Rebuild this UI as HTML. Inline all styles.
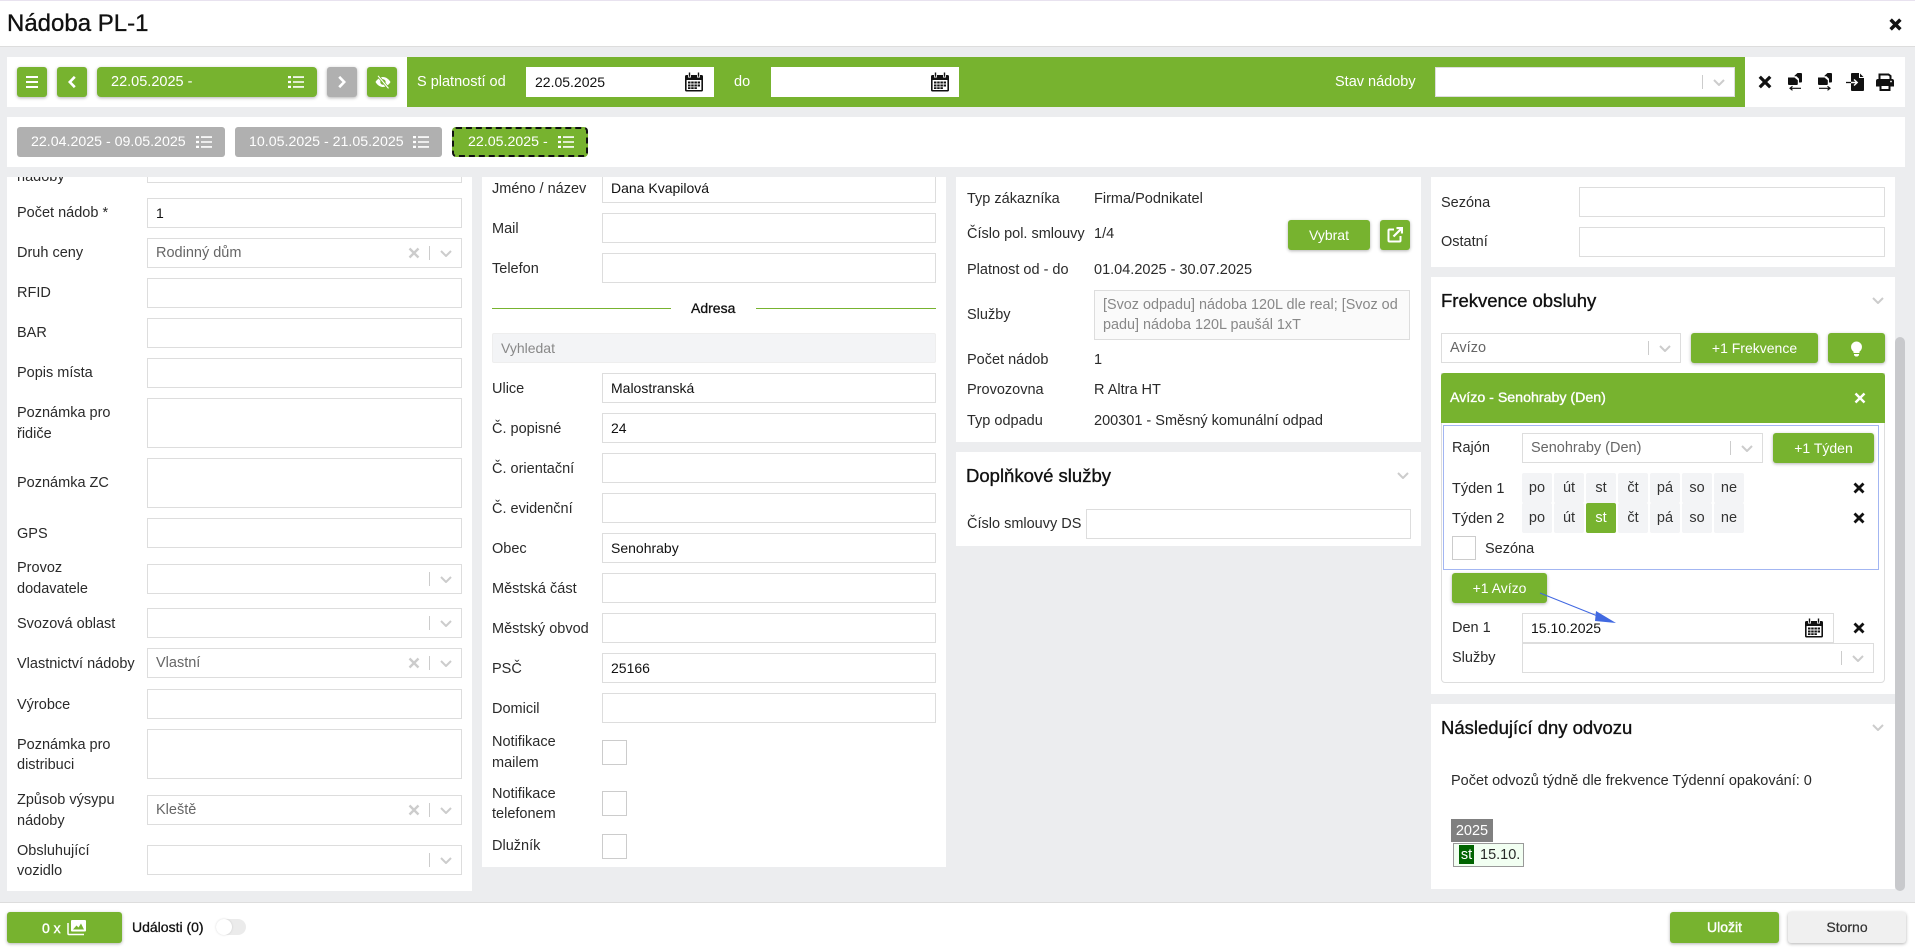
<!DOCTYPE html>
<html lang="cs"><head><meta charset="utf-8"><title>Nádoba PL-1</title>
<style>
html,body{margin:0;padding:0;width:1915px;height:952px;overflow:hidden;background:#ecedef;font-family:"Liberation Sans",sans-serif;color:#222}
*{box-sizing:border-box}
.b,.t,.in,.btn,svg.a{position:absolute}
.b{background:#fff}
.t{line-height:20px;white-space:nowrap;font-size:14.5px;color:#2a2a2a}
.n .t{margin-top:1px}
.h{font-size:18.5px;line-height:24px;color:#111;-webkit-text-stroke:.35px #111}
.in{height:30px;border:1px solid #ddd;background:#fff;line-height:28px;padding-left:8px;font-size:14px;color:#111;white-space:nowrap}
.in.s{font-size:14.5px;color:#666}
.in .sp{position:absolute;right:31px;top:7px;width:1px;height:14px;background:#ccc}
.in svg{position:absolute}
.in svg.c{right:9px;top:11px;width:12px;height:7px}
.in svg.x{right:41px;top:8px;width:12px;height:12px}
.btn{height:30px;background:#77b32f;border-radius:3px;color:#fff;text-align:center;line-height:30px;font-size:14px;box-shadow:0 1px 3px rgba(0,0,0,.3);white-space:nowrap}
.d{position:absolute;width:30px;height:30px;background:#f3f4f6;border-radius:2px;text-align:center;line-height:30px;font-size:14.5px;color:#333}
.cb{position:absolute;border:1px solid #ccc;background:#fff}
</style></head><body>
<svg width="0" height="0" style="position:absolute">
<symbol id="chev" viewBox="0 0 12 7"><polyline points="1,1 6,6 11,1" fill="none" stroke="#ccc" stroke-width="2"/></symbol>
<symbol id="xg" viewBox="0 0 12 12"><path d="M1.500 1.500L10.500 10.500M10.500 1.500L1.500 10.500" stroke="#ccc" stroke-width="2.400" fill="none"/></symbol>
<symbol id="xk" viewBox="0 0 12 12"><path d="M1.500 1.500L10.500 10.500M10.500 1.500L1.500 10.500" stroke="#111" stroke-width="2.800" fill="none"/></symbol>
<symbol id="xw" viewBox="0 0 12 12"><path d="M1.500 1.500L10.500 10.500M10.500 1.500L1.500 10.500" stroke="#fff" stroke-width="2.400" fill="none"/></symbol>
<symbol id="list" viewBox="0 0 16 14"><path d="M0 1h3v2.200H0zM0 5.900h3v2.200H0zM0 10.800h3v2.200H0zM5 1.300h11v1.600H5zM5 6.200h11v1.600H5zM5 11.100h11v1.600H5z" fill="#fff"/></symbol>
<symbol id="cal" viewBox="0 0 20 20"><path d="M1 4.500A1.500 1.500 0 0 1 2.500 3H4v2.500h3V3h6v2.500h3V3h1.500A1.500 1.500 0 0 1 19 4.500V18a1.500 1.500 0 0 1-1.500 1.500h-15A1.500 1.500 0 0 1 1 18z" fill="#111"/><path d="M4.800 .5h1.400v4.200H4.800zM13.800 .5h1.400v4.200h-1.400z" fill="#111"/><path d="M2.600 8h14.800v10H2.600z" fill="#fff"/><path d="M4 9.500h2.500v2H4zM7.200 9.500h2.500v2H7.200zM10.400 9.500h2.500v2h-2.500zM13.600 9.500H16v2h-2.400zM4 12.500h2.500v2H4zM7.200 12.500h2.500v2H7.200zM10.400 12.500h2.500v2h-2.500zM13.600 12.500H16v2h-2.400zM4 15.300h2.500v1.700H4zM7.200 15.300h2.500v1.700H7.200zM10.400 15.300h2.500v1.700h-2.500z" fill="#111"/></symbol>
<symbol id="copy" viewBox="0 0 14 18"><path d="M6.500 2.800L9.500 0H13a1 1 0 0 1 1 1v7.500a1 1 0 0 1-1 1h-2V5.800L8.500 3.300H6.500z" fill="#111"/><path d="M0 4.500h6.500L9.800 7.200V11a1 1 0 0 1-1 1H1a1 1 0 0 1-1-1z" fill="#111"/></symbol>
</svg>

<!-- Header -->
<div class="b" style="left:0;top:0;width:1915px;height:47px;border-top:1px solid #e8e2ef;border-bottom:1px solid #ddd"></div>
<div class="t" style="left:7px;top:9px;font-size:24px;line-height:30px;color:#111;-webkit-text-stroke:.35px #111">Nádoba PL-1</div>
<svg class="a" style="left:1889px;top:18px" width="13" height="13" viewBox="0 0 12 12"><path d="M1.500 1.500L10.500 10.500M10.500 1.500L1.500 10.500" stroke="#111" stroke-width="3.200" fill="none"/></svg>

<!-- Panels -->
<div class="b" style="left:7px;top:177px;width:465px;height:714px"></div>
<div class="b" style="left:482px;top:177px;width:464px;height:690px"></div>
<div class="b" style="left:956px;top:177px;width:465px;height:265px"></div>
<div class="b" style="left:956px;top:452px;width:465px;height:94px"></div>
<div class="b" style="left:1431px;top:177px;width:464px;height:90px"></div>
<div class="b" style="left:1431px;top:277px;width:464px;height:417px"></div>
<div class="b" style="left:1431px;top:704px;width:464px;height:185px"></div>
<div style="position:absolute;left:1895px;top:337px;width:10px;height:554px;background:#c8c9cc;border-radius:5px"></div>

<div class="n">
<!-- Panel 1 -->
<div class="t" style="left:17px;top:166px">nádoby</div>
<div class="in" style="left:147px;top:153px;width:315px"></div>
<div class="t" style="left:17px;top:202px">Počet nádob *</div>
<div class="in" style="left:147px;top:198px;width:315px">1</div>
<div class="t" style="left:17px;top:242px">Druh ceny</div>
<div class="in s" style="left:147px;top:238px;width:315px">Rodinný dům<svg class="x"><use href="#xg"/></svg><i class="sp"></i><svg class="c"><use href="#chev"/></svg></div>
<div class="t" style="left:17px;top:282px">RFID</div>
<div class="in" style="left:147px;top:278px;width:315px"></div>
<div class="t" style="left:17px;top:322px">BAR</div>
<div class="in" style="left:147px;top:318px;width:315px"></div>
<div class="t" style="left:17px;top:362px">Popis místa</div>
<div class="in" style="left:147px;top:358px;width:315px"></div>
<div class="t" style="left:17px;top:402px">Poznámka pro</div>
<div class="t" style="left:17px;top:423px">řidiče</div>
<div class="in" style="left:147px;top:398px;width:315px;height:50px"></div>
<div class="t" style="left:17px;top:472px">Poznámka ZC</div>
<div class="in" style="left:147px;top:458px;width:315px;height:50px"></div>
<div class="t" style="left:17px;top:523px">GPS</div>
<div class="in" style="left:147px;top:518px;width:315px"></div>
<div class="t" style="left:17px;top:557px">Provoz</div>
<div class="t" style="left:17px;top:578px">dodavatele</div>
<div class="in s" style="left:147px;top:564px;width:315px"><i class="sp"></i><svg class="c"><use href="#chev"/></svg></div>
<div class="t" style="left:17px;top:613px">Svozová oblast</div>
<div class="in s" style="left:147px;top:608px;width:315px"><i class="sp"></i><svg class="c"><use href="#chev"/></svg></div>
<div class="t" style="left:17px;top:653px">Vlastnictví nádoby</div>
<div class="in s" style="left:147px;top:648px;width:315px">Vlastní<svg class="x"><use href="#xg"/></svg><i class="sp"></i><svg class="c"><use href="#chev"/></svg></div>
<div class="t" style="left:17px;top:694px">Výrobce</div>
<div class="in" style="left:147px;top:689px;width:315px"></div>
<div class="t" style="left:17px;top:734px">Poznámka pro</div>
<div class="t" style="left:17px;top:754px">distribuci</div>
<div class="in" style="left:147px;top:729px;width:315px;height:50px"></div>
<div class="t" style="left:17px;top:789px">Způsob výsypu</div>
<div class="t" style="left:17px;top:810px">nádoby</div>
<div class="in s" style="left:147px;top:795px;width:315px">Kleště<svg class="x"><use href="#xg"/></svg><i class="sp"></i><svg class="c"><use href="#chev"/></svg></div>
<div class="t" style="left:17px;top:840px">Obsluhující</div>
<div class="t" style="left:17px;top:860px">vozidlo</div>
<div class="in s" style="left:147px;top:845px;width:315px"><i class="sp"></i><svg class="c"><use href="#chev"/></svg></div>

<!-- Panel 2 -->
<div class="t" style="left:492px;top:178px">Jméno / název</div>
<div class="in" style="left:602px;top:173px;width:334px">Dana Kvapilová</div>
<div class="t" style="left:492px;top:218px">Mail</div>
<div class="in" style="left:602px;top:213px;width:334px"></div>
<div class="t" style="left:492px;top:258px">Telefon</div>
<div class="in" style="left:602px;top:253px;width:334px"></div>
<div style="position:absolute;left:492px;top:308px;width:179px;height:1px;background:#77b32f"></div>
<div style="position:absolute;left:756px;top:308px;width:180px;height:1px;background:#77b32f"></div>
<div class="t" style="left:691px;top:297px;font-size:14px;color:#111;-webkit-text-stroke:.3px #111">Adresa</div>
<div class="in" style="left:492px;top:333px;width:444px;background:#f3f4f6;border:1px solid #eee;border-radius:2px;color:#888">Vyhledat</div>
<div class="t" style="left:492px;top:378px">Ulice</div>
<div class="in" style="left:602px;top:373px;width:334px">Malostranská</div>
<div class="t" style="left:492px;top:418px">Č. popisné</div>
<div class="in" style="left:602px;top:413px;width:334px">24</div>
<div class="t" style="left:492px;top:458px">Č. orientační</div>
<div class="in" style="left:602px;top:453px;width:334px"></div>
<div class="t" style="left:492px;top:498px">Č. evidenční</div>
<div class="in" style="left:602px;top:493px;width:334px"></div>
<div class="t" style="left:492px;top:538px">Obec</div>
<div class="in" style="left:602px;top:533px;width:334px">Senohraby</div>
<div class="t" style="left:492px;top:578px">Městská část</div>
<div class="in" style="left:602px;top:573px;width:334px"></div>
<div class="t" style="left:492px;top:618px">Městský obvod</div>
<div class="in" style="left:602px;top:613px;width:334px"></div>
<div class="t" style="left:492px;top:658px">PSČ</div>
<div class="in" style="left:602px;top:653px;width:334px">25166</div>
<div class="t" style="left:492px;top:698px">Domicil</div>
<div class="in" style="left:602px;top:693px;width:334px"></div>
<div class="t" style="left:492px;top:731px">Notifikace</div>
<div class="t" style="left:492px;top:752px">mailem</div>
<div class="cb" style="left:602px;top:740px;width:25px;height:25px"></div>
<div class="t" style="left:492px;top:783px">Notifikace</div>
<div class="t" style="left:492px;top:803px">telefonem</div>
<div class="cb" style="left:602px;top:791px;width:25px;height:25px"></div>
<div class="t" style="left:492px;top:835px">Dlužník</div>
<div class="cb" style="left:602px;top:834px;width:25px;height:25px"></div>
</div>

<!-- Panel 3 -->
<div class="t" style="left:967px;top:189px">Typ zákazníka</div>
<div class="t" style="left:1094px;top:189px">Firma/Podnikatel</div>
<div class="t" style="left:967px;top:224px">Číslo pol. smlouvy</div>
<div class="t" style="left:1094px;top:224px">1/4</div>
<div class="btn" style="left:1288px;top:220px;width:82px">Vybrat</div>
<div class="btn" style="left:1380px;top:220px;width:30px"></div>
<svg class="a" style="left:1387px;top:227px" width="16" height="16" viewBox="0 0 16 16"><path d="M7 2.500H2.500a1 1 0 0 0-1 1v10a1 1 0 0 0 1 1h10a1 1 0 0 0 1-1V9" fill="none" stroke="#fff" stroke-width="2"/><path d="M6.500 9.500L14 2M9.500 1h5.500v5.500" fill="none" stroke="#fff" stroke-width="2.200"/></svg>
<div class="t" style="left:967px;top:260px">Platnost od - do</div>
<div class="t" style="left:1094px;top:260px">01.04.2025 - 30.07.2025</div>
<div class="t" style="left:967px;top:305px">Služby</div>
<div style="position:absolute;left:1094px;top:290px;width:316px;height:50px;background:#fafafa;border:1px solid #ddd"></div>
<div class="t" style="left:1103px;top:295px;color:#888;font-size:14.4px">[Svoz odpadu] nádoba 120L dle real; [Svoz od</div>
<div class="t" style="left:1103px;top:315px;color:#888;font-size:14.4px">padu] nádoba 120L paušál 1xT</div>
<div class="t" style="left:967px;top:350px">Počet nádob</div>
<div class="t" style="left:1094px;top:350px">1</div>
<div class="t" style="left:967px;top:380px">Provozovna</div>
<div class="t" style="left:1094px;top:380px">R Altra HT</div>
<div class="t" style="left:967px;top:411px">Typ odpadu</div>
<div class="t" style="left:1094px;top:411px">200301 - Směsný komunální odpad</div>
<div class="t h" style="left:966px;top:464px">Doplňkové služby</div>
<svg class="a" style="left:1397px;top:472px" width="12" height="7"><use href="#chev"/></svg>
<div class="t" style="left:967px;top:514px">Číslo smlouvy DS</div>
<div class="in" style="left:1086px;top:509px;width:325px"></div>

<!-- Panel 4 -->
<div class="t" style="left:1441px;top:193px">Sezóna</div>
<div class="in" style="left:1579px;top:187px;width:306px"></div>
<div class="t" style="left:1441px;top:232px">Ostatní</div>
<div class="in" style="left:1579px;top:227px;width:306px"></div>

<div class="t h" style="left:1441px;top:289px">Frekvence obsluhy</div>
<svg class="a" style="left:1872px;top:297px" width="12" height="7"><use href="#chev"/></svg>
<div class="in s" style="left:1441px;top:333px;width:240px">Avízo<i class="sp"></i><svg class="c"><use href="#chev"/></svg></div>
<div class="btn" style="left:1691px;top:333px;width:127px">+1 Frekvence</div>
<div class="btn" style="left:1828px;top:333px;width:57px"></div>
<svg class="a" style="left:1850px;top:341px" width="13" height="16" viewBox="0 0 13 16"><path d="M6.500 .5a5.500 5.500 0 0 0-3 10.100V12h6v-1.400a5.500 5.500 0 0 0-3-10.100z" fill="#fff"/><path d="M4 13h5v1.200L7.500 15.500h-2L4 14.200z" fill="#fff"/></svg>

<div style="position:absolute;left:1441px;top:373px;width:444px;height:310px;border:1px solid #ddd;border-radius:0 0 4px 4px"></div>
<div style="position:absolute;left:1441px;top:373px;width:444px;height:50px;background:#77b32f;border-radius:3px 3px 0 0"></div>
<div class="t" style="left:1450px;top:388px;color:#fff;font-size:14.2px;-webkit-text-stroke:.35px #fff">Avízo - Senohraby (Den)</div>
<svg class="a" style="left:1854px;top:392px" width="12" height="12"><use href="#xw"/></svg>

<div style="position:absolute;left:1443px;top:425px;width:436px;height:145px;border:1px solid #a3b6f2"></div>
<div class="t" style="left:1452px;top:438px">Rajón</div>
<div class="in s" style="left:1522px;top:433px;width:241px">Senohraby (Den)<i class="sp"></i><svg class="c"><use href="#chev"/></svg></div>
<div class="btn" style="left:1773px;top:433px;width:101px">+1 Týden</div>
<div class="t" style="left:1452px;top:479px">Týden 1</div>
<div class="d" style="left:1522px;top:473px">po</div><div class="d" style="left:1554px;top:473px">út</div><div class="d" style="left:1586px;top:473px">st</div><div class="d" style="left:1618px;top:473px">čt</div><div class="d" style="left:1650px;top:473px">pá</div><div class="d" style="left:1682px;top:473px">so</div><div class="d" style="left:1714px;top:473px">ne</div>
<svg class="a" style="left:1853px;top:482px" width="12" height="12"><use href="#xk"/></svg>
<div class="t" style="left:1452px;top:509px">Týden 2</div>
<div class="d" style="left:1522px;top:503px">po</div><div class="d" style="left:1554px;top:503px">út</div><div class="d" style="left:1586px;top:503px;background:#77b32f;color:#fff">st</div><div class="d" style="left:1618px;top:503px">čt</div><div class="d" style="left:1650px;top:503px">pá</div><div class="d" style="left:1682px;top:503px">so</div><div class="d" style="left:1714px;top:503px">ne</div>
<svg class="a" style="left:1853px;top:512px" width="12" height="12"><use href="#xk"/></svg>
<div class="cb" style="left:1452px;top:536px;width:24px;height:24px"></div>
<div class="t" style="left:1485px;top:539px">Sezóna</div>
<div class="btn" style="left:1452px;top:573px;width:95px">+1 Avízo</div>

<div class="t" style="left:1452px;top:618px">Den 1</div>
<div class="in" style="left:1522px;top:613px;width:312px">15.10.2025</div>
<svg class="a" style="left:1804px;top:618px" width="20" height="20"><use href="#cal"/></svg>
<svg class="a" style="left:1853px;top:622px" width="12" height="12"><use href="#xk"/></svg>
<div class="t" style="left:1452px;top:648px">Služby</div>
<div class="in s" style="left:1522px;top:643px;width:352px"><i class="sp"></i><svg class="c"><use href="#chev"/></svg></div>
<svg class="a" style="left:1530px;top:585px" width="95" height="45" viewBox="1530 585 95 45"><path d="M1540 593L1600 617" stroke="#4169e1" stroke-width="1" fill="none"/><path d="M1616 623L1596 611L1595 621z" fill="#4169e1"/></svg>

<div class="t h" style="left:1441px;top:716px">Následující dny odvozu</div>
<svg class="a" style="left:1872px;top:724px" width="12" height="7"><use href="#chev"/></svg>
<div class="t" style="left:1451px;top:771px">Počet odvozů týdně dle frekvence Týdenní opakování: 0</div>
<div style="position:absolute;left:1451px;top:819px;width:42px;height:23px;background:#808080;color:#fff;font-size:14.5px;line-height:24px;text-align:center">2025</div>
<div style="position:absolute;left:1453px;top:843px;width:71px;height:24px;border:1px solid #999;background:#f2fff2"></div>
<div style="position:absolute;left:1459px;top:845px;width:15px;height:19px;background:#006400;color:#fff;font-size:14.5px;line-height:20px;text-align:center">st</div>
<div class="t" style="left:1480px;top:845px">15.10.</div>

<!-- Top strip / toolbars -->
<div style="position:absolute;left:0;top:167px;width:1915px;height:10px;background:#ecedef"></div>
<div class="b" style="left:7px;top:57px;width:1898px;height:50px"></div>
<div style="position:absolute;left:407px;top:57px;width:1338px;height:50px;background:#77b32f"></div>

<div class="btn" style="left:17px;top:67px;width:30px"></div>
<svg class="a" style="left:26px;top:76px" width="12" height="12" viewBox="0 0 12 12"><path d="M0 1h12M0 6h12M0 11h12" stroke="#fff" stroke-width="2"/></svg>
<div class="btn" style="left:57px;top:67px;width:30px"></div>
<svg class="a" style="left:68px;top:76px" width="8" height="12" viewBox="0 0 8 12"><path d="M6.800 .8L1.800 6l5 5.200" fill="none" stroke="#fff" stroke-width="2.600"/></svg>
<div class="btn" style="left:97px;top:67px;width:220px;border-radius:4px"></div>
<div class="t" style="left:111px;top:72px;color:#fff">22.05.2025 -</div>
<svg class="a" style="left:288px;top:75px" width="16" height="14"><use href="#list"/></svg>
<div class="btn" style="left:327px;top:67px;width:30px;background:#b0b0b0"></div>
<svg class="a" style="left:338px;top:76px" width="8" height="12" viewBox="0 0 8 12"><path d="M1.200 .8L6.200 6l-5 5.200" fill="none" stroke="#fff" stroke-width="2.600"/></svg>
<div class="btn" style="left:367px;top:67px;width:30px"></div>
<svg class="a" style="left:375px;top:75px" width="16" height="14" viewBox="0 0 16 14"><path fill-rule="evenodd" d="M.5 7S3.200 2 8 2s7.500 5 7.500 5-2.700 5-7.500 5S.5 7 .5 7zM8 4.300a2.700 2.700 0 1 0 0 5.400 2.700 2.700 0 0 0 0-5.400z" fill="#fff"/><path d="M3 .8l10.500 12.600" stroke="#77b32f" stroke-width="2.600"/><path d="M3 .8l10.500 12.600" stroke="#fff" stroke-width="1.100"/></svg>

<div class="t" style="left:417px;top:72px;color:#fff">S platností od</div>
<div class="in" style="left:526px;top:67px;width:188px;border:0;line-height:30px;padding-left:9px">22.05.2025</div>
<svg class="a" style="left:684px;top:72px" width="20" height="20"><use href="#cal"/></svg>
<div class="t" style="left:734px;top:72px;color:#fff">do</div>
<div class="in" style="left:771px;top:67px;width:188px;border:0"></div>
<svg class="a" style="left:930px;top:72px" width="20" height="20"><use href="#cal"/></svg>
<div class="t" style="left:1335px;top:72px;color:#fff">Stav nádoby</div>
<div class="in s" style="left:1435px;top:67px;width:300px"><i class="sp"></i><svg class="c"><use href="#chev"/></svg></div>

<svg class="a" style="left:1758px;top:75px" width="14" height="14" viewBox="0 0 12 12"><use href="#xk"/></svg>
<svg class="a" style="left:1788px;top:73px" width="14" height="18" viewBox="0 0 14 18"><use href="#copy"/><path d="M13 15.300H2M4.500 13.300L2 15.300l2.500 2" fill="none" stroke="#111" stroke-width="1.200"/></svg>
<svg class="a" style="left:1818px;top:73px" width="14" height="18" viewBox="0 0 14 18"><use href="#copy"/><path d="M1 15.300h11M9.500 13.300l2.500 2-2.500 2" fill="none" stroke="#111" stroke-width="1.200"/></svg>
<svg class="a" style="left:1846px;top:73px" width="19" height="18" viewBox="0 0 19 18"><path d="M5 1a1 1 0 0 1 1-1h7.500L18 4.500V17a1 1 0 0 1-1 1H6a1 1 0 0 1-1-1z" fill="#111"/><path d="M13.500 0v4.500H18" fill="none" stroke="#fff" stroke-width="1"/><path d="M0 9.500h5" stroke="#111" stroke-width="1.300"/><path d="M5 9.500h6M8 6.500l3.200 3-3.200 3" fill="none" stroke="#fff" stroke-width="1.400"/></svg>
<svg class="a" style="left:1876px;top:73px" width="18" height="18" viewBox="0 0 18 18"><path d="M3.500 6V1.500h9L14.500 3v3" fill="none" stroke="#111" stroke-width="2"/><path d="M2 6h14a2 2 0 0 1 2 2v5.500h-3.500V11h-11v2.500H0V8a2 2 0 0 1 2-2z" fill="#111"/><path d="M4.500 12h9v5h-9z" fill="none" stroke="#111" stroke-width="2"/><circle cx="15" cy="8.500" r=".9" fill="#fff"/></svg>

<div class="b" style="left:7px;top:117px;width:1898px;height:50px"></div>
<div class="btn" style="left:17px;top:127px;width:208px;background:#b0b0b0;border-radius:3px;box-shadow:none"></div>
<div class="t" style="left:31px;top:132px;color:#fff;font-size:14.2px">22.04.2025 - 09.05.2025</div>
<svg class="a" style="left:196px;top:135px" width="16" height="14"><use href="#list"/></svg>
<div class="btn" style="left:235px;top:127px;width:207px;background:#b0b0b0;border-radius:3px;box-shadow:none"></div>
<div class="t" style="left:249px;top:132px;color:#fff;font-size:14.2px">10.05.2025 - 21.05.2025</div>
<svg class="a" style="left:413px;top:135px" width="16" height="14"><use href="#list"/></svg>
<div class="btn" style="left:452px;top:127px;width:136px;border:2px dashed #111;border-radius:4px;box-shadow:none"></div>
<div class="t" style="left:468px;top:132px;color:#fff;font-size:14.2px">22.05.2025 -</div>
<svg class="a" style="left:558px;top:135px" width="16" height="14"><use href="#list"/></svg>

<!-- Footer -->
<div class="b" style="left:0;top:902px;width:1915px;height:50px;border-top:1px solid #ddd"></div>
<div class="btn" style="left:7px;top:912px;width:115px;height:31px;line-height:31px"></div>
<div class="t" style="left:42px;top:918px;color:#fff;font-size:14px;-webkit-text-stroke:.4px #fff">0 x</div>
<svg class="a" style="left:67px;top:919px" width="20" height="17" viewBox="0 0 20 17"><path d="M1 4v10.500a1 1 0 0 0 1 1h15" fill="none" stroke="#fff" stroke-width="1.500"/><path d="M4 2a1 1 0 0 1 1-1h13a1 1 0 0 1 1 1v9.500a1 1 0 0 1-1 1H5a1 1 0 0 1-1-1z" fill="#fff"/><path d="M6 10.500l3.500-4 2 2 2.500-4 3 6z" fill="#77b32f"/></svg>
<div class="t" style="left:132px;top:917px;font-size:14px;color:#111;-webkit-text-stroke:.3px #111">Události (0)</div>
<div style="position:absolute;left:216px;top:919px;width:30px;height:16px;border-radius:8px;background:#ebebeb"></div>
<div style="position:absolute;left:216px;top:919px;width:16px;height:16px;border-radius:8px;background:#fff;box-shadow:0 0 2px rgba(0,0,0,.15)"></div>
<div class="btn" style="left:1670px;top:912px;width:109px;height:31px;line-height:31px;-webkit-text-stroke:.4px #fff">Uložit</div>
<div class="btn" style="left:1788px;top:912px;width:118px;height:31px;line-height:31px;background:#f0f0f0;color:#333;-webkit-text-stroke:.2px #333">Storno</div>
</body></html>
